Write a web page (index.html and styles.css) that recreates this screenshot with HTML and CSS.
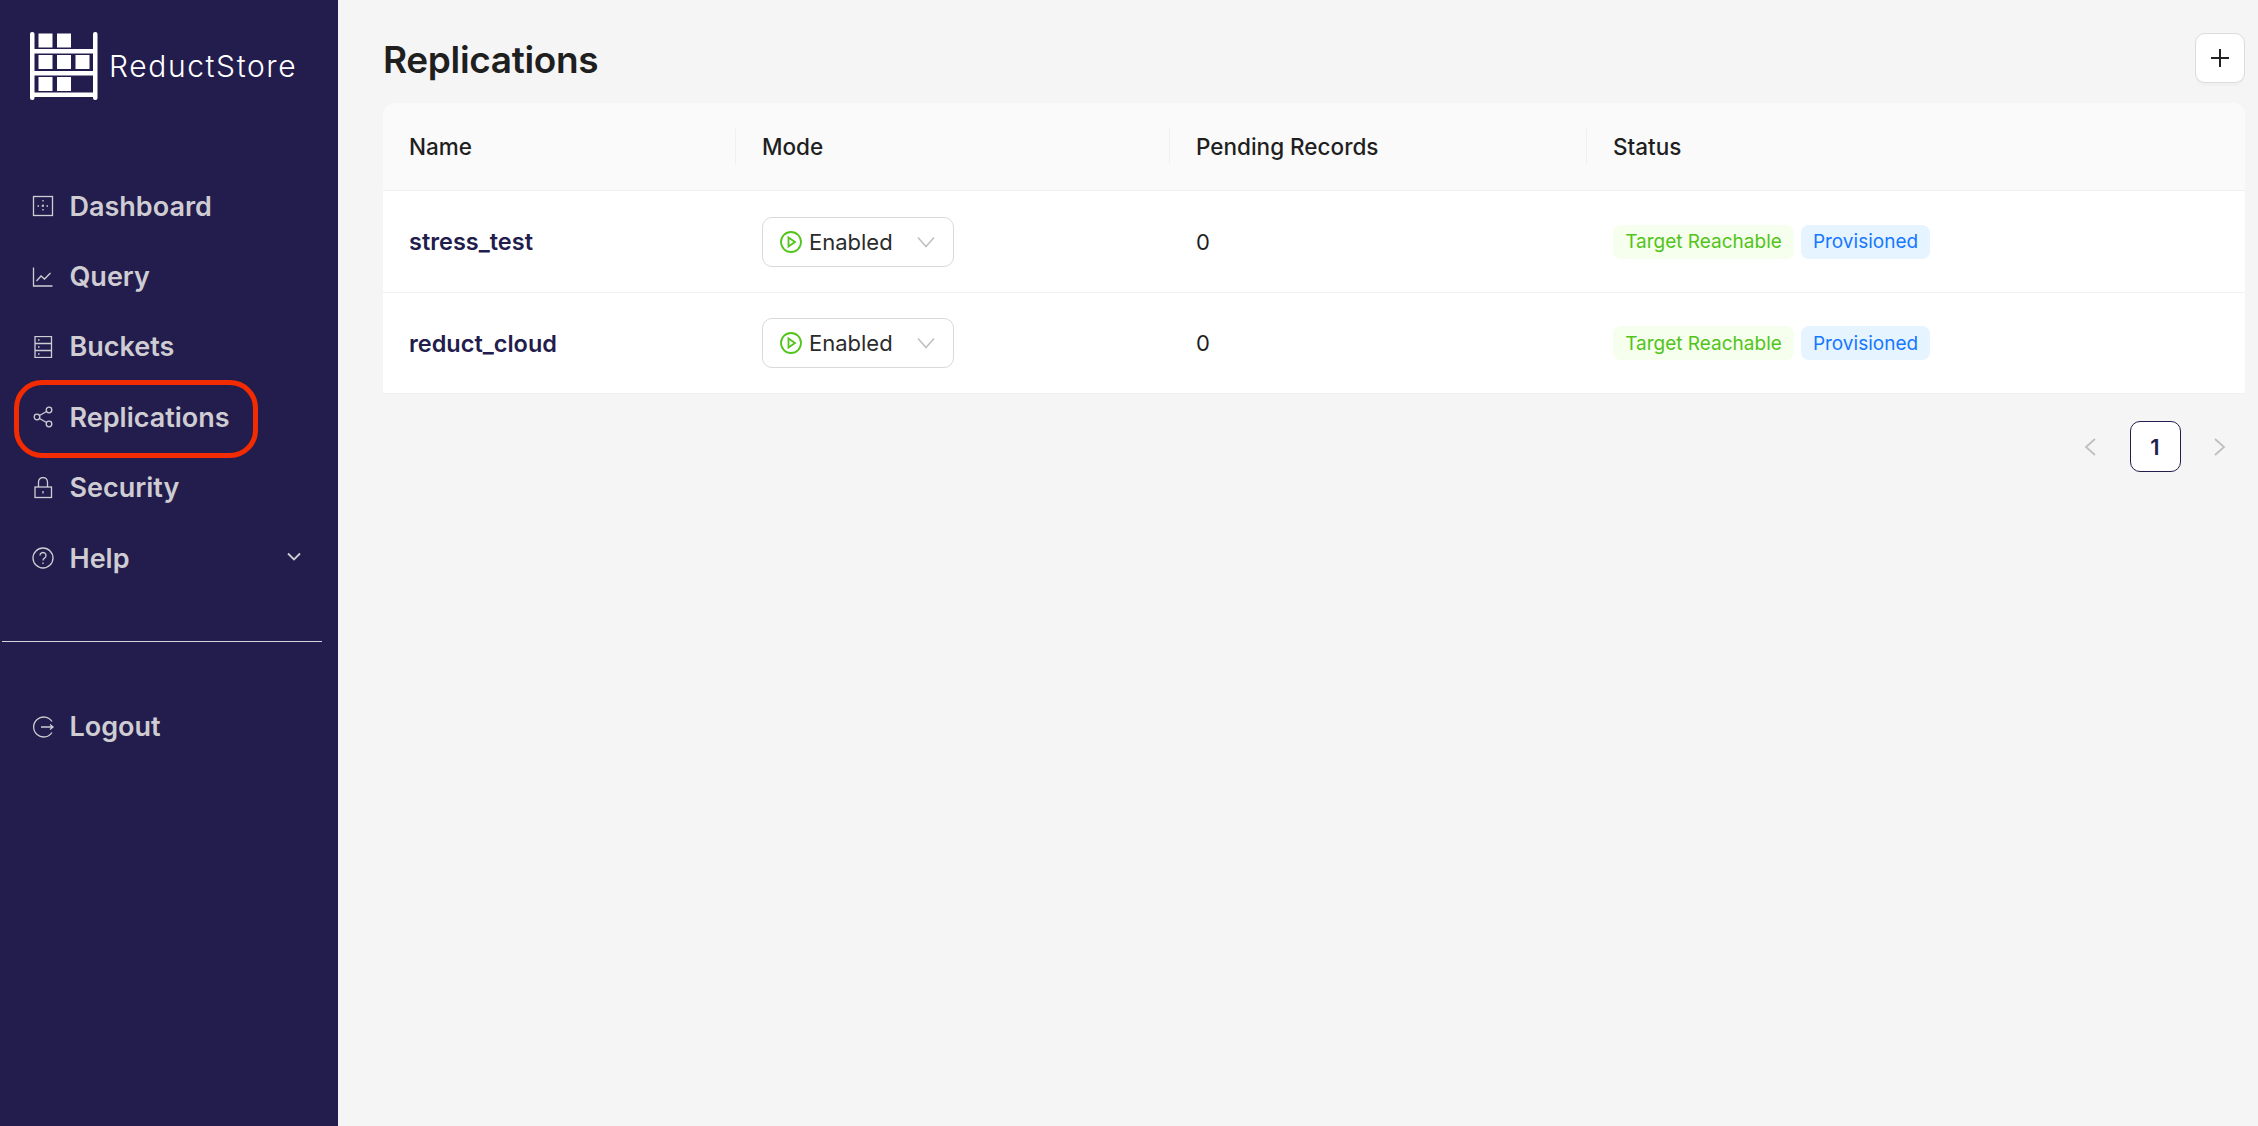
FILE: index.html
```html
<!DOCTYPE html>
<html lang="en">
<head>
<meta charset="utf-8">
<title>Replications</title>
<link rel="stylesheet" href="styles.css">
</head>
<body>
<div class="app">
  <aside class="sidebar">
    <div class="brand">
      <svg class="brand-mark" viewBox="0 0 68 68" width="68" height="68">
        <g fill="#fff">
          <rect x="0" y="0" width="4.5" height="68" rx="2"/>
          <rect x="63" y="0" width="4.5" height="68" rx="2"/>
          <rect x="3" y="17" width="62" height="4.5"/>
          <rect x="3" y="39" width="62" height="4.5"/>
          <rect x="3" y="60.500" width="62" height="4.5"/>
          <rect x="8.500" y="1.500" width="14" height="14"/>
          <rect x="27" y="1.500" width="14" height="14"/>
          <rect x="8.500" y="23" width="14" height="14"/>
          <rect x="27" y="23" width="14" height="14"/>
          <rect x="45.500" y="23" width="14" height="14"/>
          <rect x="8.500" y="45" width="14" height="14"/>
          <rect x="27" y="45" width="14" height="14"/>
        </g>
      </svg>
      <span class="brand-name">ReductStore</span>
    </div>
    <nav class="nav">
      <a class="nav-item">
        <svg class="nav-icon" viewBox="0 0 22 22"><rect x="1.500" y="1.500" width="19" height="19"/><path class="dots" d="M11 5v1.500M11 9.500v1.500M11 14v1.500M5.500 11H7M9.700 11h2.300M14.500 11H16"/></svg>
        <span>Dashboard</span>
      </a>
      <a class="nav-item">
        <svg class="nav-icon" viewBox="0 0 22 22"><path d="M1.500 1.500v18.500h19"/><path d="M4.500 15l4.500-5 3.500 3 6-6"/></svg>
        <span>Query</span>
      </a>
      <a class="nav-item">
        <svg class="nav-icon" viewBox="0 0 22 22"><rect x="3" y="0.500" width="16.500" height="21"/><path d="M3 7.500h16.500M3 14.500h16.500M6 4h1.500M6 11h1.500M6 18h1.500"/></svg>
        <span>Buckets</span>
      </a>
      <a class="nav-item">
        <svg class="nav-icon" viewBox="0 0 22 22"><circle cx="5" cy="11" r="2.800"/><circle cx="17" cy="4" r="2.800"/><circle cx="17" cy="18" r="2.800"/><path d="M7.500 9.500l7-4M7.500 12.500l7 4"/></svg>
        <span>Replications</span>
      </a>
      <a class="nav-item">
        <svg class="nav-icon" viewBox="0 0 22 22"><rect x="3" y="10" width="16.500" height="10.500"/><path d="M6.500 10V5a4.500 4.500 0 0 1 9 0v5M11 14v2.500"/></svg>
        <span>Security</span>
      </a>
      <a class="nav-item">
        <svg class="nav-icon" viewBox="0 0 22 22"><circle cx="11" cy="11" r="10"/><path d="M8 8.500a3 3 0 1 1 4.500 2.600c-1 .6-1.500 1.100-1.500 2.400M11 15.500v1.500"/></svg>
        <span class="nav-label">Help</span>
        <svg class="nav-caret" viewBox="0 0 14 9"><path d="M1 1.500l6 6 6-6"/></svg>
      </a>
    </nav>
    <hr class="divider">
    <a class="nav-item">
      <svg class="nav-icon" viewBox="0 0 22 22"><path d="M20 5.500A10 10 0 1 0 20 16.500M9 11h12M18 8.500l3 2.500-3 2.500"/></svg>
      <span>Logout</span>
    </a>
    <div class="highlight"></div>
  </aside>
  <main class="main">
    <header class="page-head">
      <h1>Replications</h1>
      <button class="add-btn" aria-label="Add">
        <svg viewBox="0 0 20 20" width="20" height="20"><path d="M10 1v18M1 10h18"/></svg>
      </button>
    </header>
    <section class="table">
      <div class="row head">
        <div class="cell"><span class="th">Name</span></div>
        <div class="cell"><span class="th sep">Mode</span></div>
        <div class="cell"><span class="th sep">Pending Records</span></div>
        <div class="cell"><span class="th sep">Status</span></div>
      </div>
      <div class="row body-row">
        <div class="cell name">stress_test</div>
        <div class="cell pad">
          <div class="select">
            <svg class="play" viewBox="0 0 22 22" width="22" height="22"><circle cx="11" cy="11" r="10"/><path d="M8.500 6.500l6.500 4.500-6.500 4.500z"/></svg>
            <span class="select-value">Enabled</span>
            <svg class="select-caret" viewBox="0 0 18 12" width="18" height="12"><path d="M1 1.500l8 9 8-9"/></svg>
          </div>
        </div>
        <div class="cell pad num">0</div>
        <div class="cell pad tags"><span class="tag green">Target Reachable</span><span class="tag blue">Provisioned</span></div>
      </div>
      <div class="row body-row">
        <div class="cell name">reduct_cloud</div>
        <div class="cell pad">
          <div class="select">
            <svg class="play" viewBox="0 0 22 22" width="22" height="22"><circle cx="11" cy="11" r="10"/><path d="M8.500 6.500l6.500 4.500-6.500 4.500z"/></svg>
            <span class="select-value">Enabled</span>
            <svg class="select-caret" viewBox="0 0 18 12" width="18" height="12"><path d="M1 1.500l8 9 8-9"/></svg>
          </div>
        </div>
        <div class="cell pad num">0</div>
        <div class="cell pad tags"><span class="tag green">Target Reachable</span><span class="tag blue">Provisioned</span></div>
      </div>
    </section>
    <div class="pager">
      <svg class="pager-arrow" viewBox="0 0 12 18" width="12" height="18"><path d="M11 1L2 9l9 8"/></svg>
      <span class="page">1</span>
      <svg class="pager-arrow" viewBox="0 0 12 18" width="12" height="18"><path d="M1 1l9 8-9 8"/></svg>
    </div>
  </main>
</div>
</body>
</html>
```
FILE: styles.css
```css
* { box-sizing: border-box; }
html, body { margin: 0; height: 100%; }
body { font-family: Inter, "Liberation Sans", sans-serif; background: #f5f5f5; color: #1f1f1f; }
.app { display: flex; height: 1126px; overflow: hidden; }

.sidebar { position: relative; flex: 0 0 338px; background: #231d4d; padding-top: 32px; display: flex; flex-direction: column; }
.brand { display: flex; align-items: center; gap: 11px; padding-left: 30px; height: 68px; }
.brand-mark { flex: none; }
.brand-name { font-family: Inter, sans-serif; font-weight: 300; font-size: 30px; color: #fff; letter-spacing: 1.600px; }
.nav { margin-top: 71px; display: flex; flex-direction: column; }
.nav-item { display: flex; align-items: center; height: 70.400px; padding-left: 32px; font-size: 27px; font-weight: 600; color: #cfcdd3; }
.nav-icon { flex: none; width: 22px; height: 22px; margin-right: 15.500px; fill: none; stroke: #cfcdd3; stroke-width: 1.300; }
.nav-label { flex: 1; }
.nav-caret { flex: none; width: 14px; height: 9px; margin-right: 37px; margin-top: -3px; fill: none; stroke: #cfcdd3; stroke-width: 1.800; }
.divider { width: 320px; margin: 48px 0 49px 2px; border: 0; border-top: 1px solid #d6d4dc; }
.highlight { position: absolute; left: 14px; top: 380px; width: 244px; height: 78px; border: 5px solid #f22b00; border-radius: 28px; }

.main { flex: 1; padding: 0 13px 0 45px; min-width: 0; }
.page-head { display: flex; justify-content: space-between; align-items: flex-start; height: 103px; padding-top: 35px; }
.page-head h1 { margin: 0; font-size: 37px; line-height: 50px; font-weight: 600; color: #1f1f1f; letter-spacing: -0.350px; }
.add-btn { width: 50px; height: 50px; padding: 0; margin-top: -2px; display: flex; align-items: center; justify-content: center; background: #fff; border: 1.500px solid #dcdcdc; border-radius: 10px; box-shadow: 0 3px 0 rgba(0,0,0,.02); }
.add-btn path { fill: none; stroke: #222; stroke-width: 2; }

.table { background: #fff; border-radius: 12px 12px 0 0; overflow: hidden; }
.row { display: grid; grid-template-columns: 352px 434px 417px 1fr; height: 101.500px; border-bottom: 1px solid #f0f0f0; align-items: center; }
.row.head { height: 88px; background: #fafafa; }
.body-row { padding-top: 1px; }
.cell { display: flex; align-items: center; font-size: 22px; }
.th { display: flex; align-items: center; height: 35px; padding-left: 26px; font-weight: 500; font-size: 22.500px; color: #1f1f1f; }
.th.sep { border-left: 1px solid #f0f0f0; }
.name { padding-left: 26px; font-weight: 600; font-size: 23.500px; color: #231d4d; }
.pad { padding-left: 27px; }
.num { color: #1f1f1f; }
.select { display: flex; align-items: center; width: 192px; height: 50px; padding-left: 17px; background: #fff; border: 1.500px solid #d9d9d9; border-radius: 10px; color: #2b2b2b; }
.play { flex: none; margin-right: 7px; }
.play circle, .play path { fill: none; stroke: #52c41a; stroke-width: 1.800; }
.select-value { flex: 1; }
.select-caret { flex: none; margin-right: 18px; fill: none; stroke: #bfbfbf; stroke-width: 1.500; }
.tags { gap: 7px; }
.tag { display: flex; align-items: center; justify-content: center; height: 34px; border-radius: 8px; font-size: 19px; font-weight: 400; }
.tag.green { width: 181px; background: #f6ffed; color: #52c41a; }
.tag.blue { width: 129px; background: #e6f4ff; color: #1677ff; }

.pager { display: flex; align-items: center; justify-content: flex-end; height: 51px; margin-top: 27px; gap: 33.500px; padding-right: 19px; }
.pager-arrow { flex: none; fill: none; stroke: #bfbfbf; stroke-width: 1.800; }
.page { display: flex; align-items: center; justify-content: center; width: 51px; height: 51px; background: #fff; border: 1.500px solid #231d4d; border-radius: 10px; font-size: 22px; font-weight: 600; color: #231d4d; }
```
